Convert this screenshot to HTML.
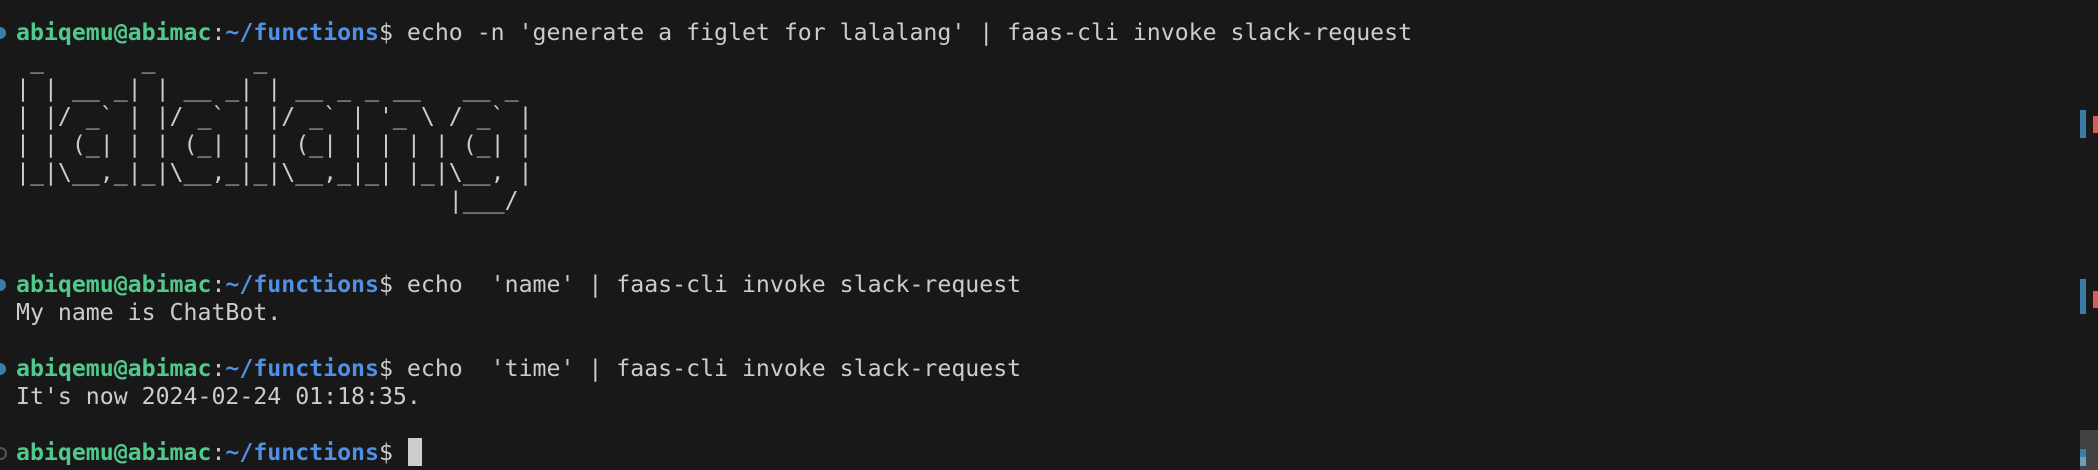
<!DOCTYPE html>
<html><head><meta charset="utf-8"><style>
html,body{margin:0;padding:0;background:#181818;width:2098px;height:470px;overflow:hidden;position:relative}
.l{position:absolute;left:16px;height:28px;line-height:28px;font-family:"DejaVu Sans Mono","Liberation Mono",monospace;font-size:23.2px;color:#cccccc;white-space:pre}
.g{color:#50c98c;font-weight:bold}
.b{color:#4f8fe6;font-weight:bold}
.dot{position:absolute;left:-6px;width:12px;height:12px;border-radius:50%;background:#3a7cab}
.r{position:absolute}
</style></head><body>
<div class="dot" style="top:27px"></div>
<div class="dot" style="top:279px"></div>
<div class="dot" style="top:363px"></div>
<div class="dot" style="top:447px;background:none;border:2px solid #555;width:9px;height:9px;left:-6px"></div>

<div class="l" style="top:19px"><span class="g">abiqemu@abimac</span>:<span class="b">~/functions</span>$ echo -n 'generate a figlet for lalalang' | faas-cli invoke slack-request</div>
<div class="l" style="top:47px"> _       _       _                   </div>
<div class="l" style="top:75px">| | __ _| | __ _| | __ _ _ __   __ _ </div>
<div class="l" style="top:103px">| |/ _` | |/ _` | |/ _` | '_ \ / _` |</div>
<div class="l" style="top:131px">| | (_| | | (_| | | (_| | | | | (_| |</div>
<div class="l" style="top:159px">|_|\__,_|_|\__,_|_|\__,_|_| |_|\__, |</div>
<div class="l" style="top:187px">                               |___/ </div>
<div class="l" style="top:271px"><span class="g">abiqemu@abimac</span>:<span class="b">~/functions</span>$ echo  'name' | faas-cli invoke slack-request</div>
<div class="l" style="top:299px">My name is ChatBot.</div>
<div class="l" style="top:355px"><span class="g">abiqemu@abimac</span>:<span class="b">~/functions</span>$ echo  'time' | faas-cli invoke slack-request</div>
<div class="l" style="top:383px">It's now 2024-02-24 01:18:35.</div>
<div class="l" style="top:439px"><span class="g">abiqemu@abimac</span>:<span class="b">~/functions</span>$ </div>
<div class="r" style="left:408px;top:438px;width:14px;height:28px;background:#cccccc"></div>

<div class="r" style="left:2080px;top:110px;width:6px;height:28px;background:#3a7ea6"></div>
<div class="r" style="left:2093px;top:116px;width:5px;height:17px;background:#e05a52"></div>
<div class="r" style="left:2080px;top:279px;width:6px;height:35px;background:#3a7ea6"></div>
<div class="r" style="left:2093px;top:291px;width:5px;height:17px;background:#e05a52"></div>
<div class="r" style="left:2080px;top:430px;width:18px;height:40px;background:#424242"></div>
<div class="r" style="left:2080px;top:449px;width:6px;height:8px;background:#3a7ea6"></div>
<div class="r" style="left:2080px;top:457px;width:6px;height:9px;background:#6a9fc0"></div>
</body></html>
